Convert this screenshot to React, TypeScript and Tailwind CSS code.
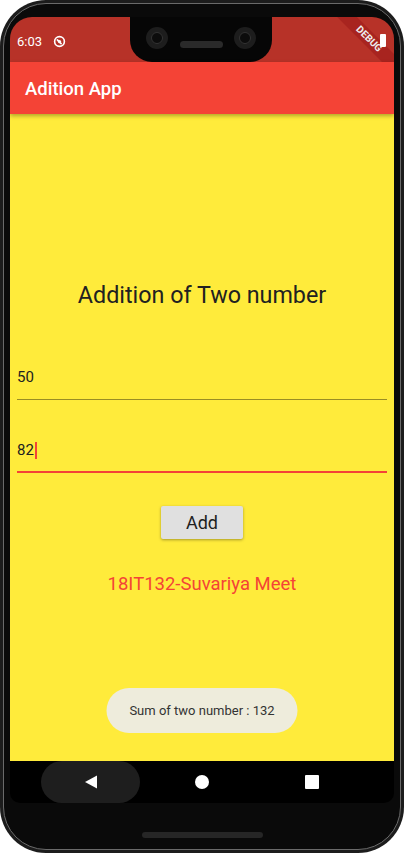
export default function App() {
  return (
    <div className="w-[404px] h-[853px] bg-white font-['Roboto',sans-serif]">
      <div className="h-full w-full rounded-[46px] bg-[#1c1c1c] p-[3px]">
        <div className="h-full w-full rounded-[43px] border border-[#6a6a6a] bg-[#0a0a0a] px-[6px] pt-[13px] flex flex-col">
          <div className="relative h-[786px] flex flex-col overflow-hidden rounded-t-[22px] rounded-b-[10px]">
            {/* status bar */}
            <div className="h-[45px] bg-[#b73228] flex items-center pl-[7px] pr-[8px] pt-[4px] text-white">
              <span className="text-[13px]">6:03</span>
              <svg width="13" height="13" viewBox="0 0 24 24" className="ml-[11px]">
                <circle cx="12" cy="12" r="9" fill="none" stroke="white" strokeWidth="3" />
                <path d="M8 9 L15 16" stroke="white" strokeWidth="3" strokeLinecap="round" />
                <circle cx="12" cy="12" r="3" fill="white" />
              </svg>
            </div>

            {/* app bar */}
            <div className="relative z-10 h-[52px] bg-[#f44336] flex items-center pl-[15px] pt-[3px] shadow-[0_2px_4px_rgba(0,0,0,0.3)]">
              <span className="text-white text-[18.5px] font-medium">Adition App</span>
            </div>

            {/* body */}
            <div className="flex-1 bg-[#ffeb3b] flex flex-col px-[7px]">
              <p className="mt-[167px] text-center text-[23.3px] leading-[28px] text-[#212121]">
                Addition of Two number
              </p>
              <div className="mt-[58px] pb-[12px] border-b border-[#998d23]">
                <p className="text-[15px] leading-[20px] text-[#212121]">50</p>
              </div>
              <div className="mt-[40px] pb-[11px] border-b-2 border-[#f44336]">
                <p className="text-[15px] leading-[20px] text-[#212121] flex items-center">
                  82
                  <span className="ml-[1px] w-[2px] h-[17px] bg-[#f44336]" />
                </p>
              </div>
              <button className="mt-[33px] self-center w-[82px] h-[33px] bg-[#e0e0e0] rounded-[2px] shadow-[0_1px_3px_rgba(0,0,0,0.35)] text-[18px] text-[#212121]">
                Add
              </button>
              <p className="mt-[33px] text-center text-[18.5px] leading-[24px] text-[#f44336]">
                18IT132-Suvariya Meet
              </p>
            </div>

            {/* nav bar */}
            <div className="h-[42px] bg-black flex items-center pl-[31px]">
              <div className="w-[99px] h-[42px] rounded-full bg-[#1e1e1e] flex items-center justify-center">
                <svg width="14" height="14" viewBox="0 0 14 14">
                  <path d="M1 7 L13 0.5 L13 13.5 Z" fill="white" />
                </svg>
              </div>
              <div className="ml-[55px] w-[14px] h-[14px] rounded-full bg-white" />
              <div className="ml-[96px] w-[14px] h-[14px] rounded-[1px] bg-white" />
            </div>

            {/* notch */}
            <div className="absolute top-0 left-[120px] w-[142px] h-[45px] bg-[#060606] rounded-b-[22px]">
              <div className="absolute left-[16px] top-[10px] w-[22px] h-[22px] rounded-full bg-[#1d1d1d] flex items-center justify-center">
                <div className="w-[12px] h-[12px] rounded-full bg-[#0c0c0c] border border-[#333]" />
              </div>
              <div className="absolute left-[104px] top-[10px] w-[22px] h-[22px] rounded-full bg-[#1d1d1d] flex items-center justify-center">
                <div className="w-[12px] h-[12px] rounded-full bg-[#0c0c0c] border border-[#333]" />
              </div>
              <div className="absolute left-[50px] top-[24px] w-[43px] h-[7px] rounded-full bg-[#2a2a2a]" />
            </div>

            {/* debug banner */}
            <div className="absolute top-[15px] left-[314px] w-[90px] h-[14px] rotate-45 bg-[rgba(150,20,20,0.45)] flex items-center justify-center">
              <span className="text-[10px] font-bold text-[#eee] leading-none">DEBUG</span>
            </div>

            {/* battery sits on top of the banner */}
            <div className="absolute top-[17px] left-[370px] w-[6px] h-[13px] bg-white rounded-[1px]" />

            {/* toast */}
            <div className="absolute top-[671px] left-1/2 -translate-x-1/2 w-[191px] h-[45px] rounded-full bg-[#eeecdc] flex items-center justify-center">
              <span className="text-[13px] text-[#333]">Sum of two number : 132</span>
            </div>
          </div>
          <div className="mt-[29px] self-center w-[121px] h-[6px] rounded-full bg-[#262626]" />
        </div>
      </div>
    </div>
  );
}
